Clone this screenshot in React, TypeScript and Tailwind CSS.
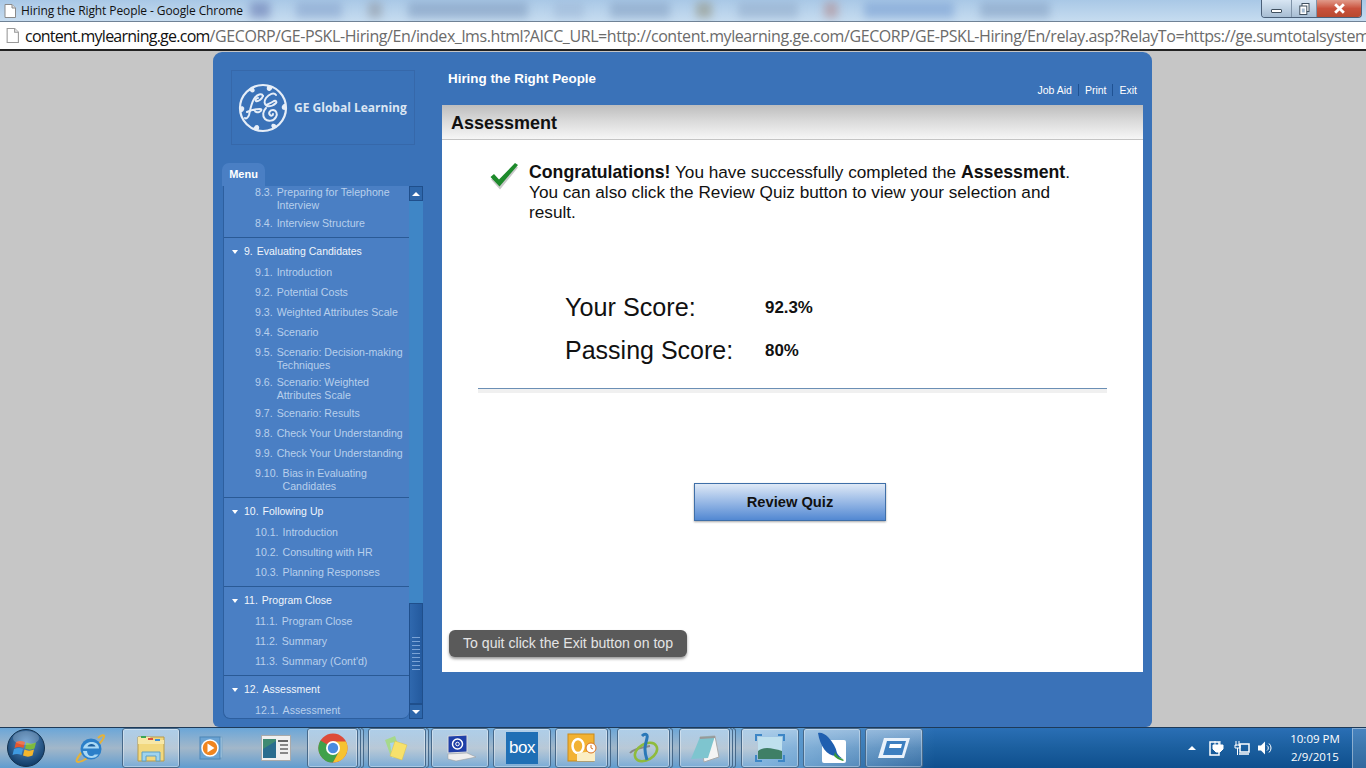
import type { ReactNode } from "react";

type Item = { n: string; t: string };
type Section = { n?: string; title?: string; items: Item[]; pb: string };

const sections: Section[] = [
  {
    pb: "pb-[3px]",
    items: [
      { n: "8.3.", t: "Preparing for Telephone Interview" },
      { n: "8.4.", t: "Interview Structure" },
    ],
  },
  {
    n: "9.",
    title: "Evaluating Candidates",
    pb: "pb-[2.5px]",
    items: [
      { n: "9.1.", t: "Introduction" },
      { n: "9.2.", t: "Potential Costs" },
      { n: "9.3.", t: "Weighted Attributes Scale" },
      { n: "9.4.", t: "Scenario" },
      { n: "9.5.", t: "Scenario: Decision-making Techniques" },
      { n: "9.6.", t: "Scenario: Weighted Attributes Scale" },
      { n: "9.7.", t: "Scenario: Results" },
      { n: "9.8.", t: "Check Your Understanding" },
      { n: "9.9.", t: "Check Your Understanding" },
      { n: "9.10.", t: "Bias in Evaluating Candidates" },
    ],
  },
  {
    n: "10.",
    title: "Following Up",
    pb: "pb-[3px]",
    items: [
      { n: "10.1.", t: "Introduction" },
      { n: "10.2.", t: "Consulting with HR" },
      { n: "10.3.", t: "Planning Responses" },
    ],
  },
  {
    n: "11.",
    title: "Program Close",
    pb: "pb-[3px]",
    items: [
      { n: "11.1.", t: "Program Close" },
      { n: "11.2.", t: "Summary" },
      { n: "11.3.", t: "Summary (Cont'd)" },
    ],
  },
  {
    n: "12.",
    title: "Assessment",
    pb: "pb-0",
    items: [{ n: "12.1.", t: "Assessment" }],
  },
];

function MenuSection({ s, last }: { s: Section; last: boolean }) {
  return (
    <div className={`${s.pb} ${last ? "" : "border-b border-[#2a5a96]"}`}>
      {s.title && (
        <div className="flex h-[25px] items-center pl-[8px] pt-[3px] text-[10.5px] text-[#f0f5fb]">
          <span className="mr-[6px] h-0 w-0 border-x-[3.5px] border-t-[4px] border-x-transparent border-t-white" />
          <span className="mr-[4px]">{s.n}</span>
          <span>{s.title}</span>
        </div>
      )}
      {s.items.map((it) => (
        <div key={it.n} className="flex min-h-[20px] gap-[4px] pt-[3px] pb-[1.5px] pl-[31px] pr-[2px] text-[10.6px] leading-[13px] text-[#b8cfec]">
          <span className="shrink-0">{it.n}</span>
          <span>{it.t}</span>
        </div>
      ))}
    </div>
  );
}

function GeLogo() {
  return (
    <svg viewBox="0 0 50 50" className="h-[50px] w-[50px] shrink-0">
      <circle cx="25" cy="25" r="23" fill="none" stroke="#e6eef8" strokeWidth="2.2" />
      <g fill="#e6eef8">
        <path d="M30 2c-2 3-1.500 5.500 1 6 2.500 0 3-2.500 4.500-4.500z" />
        <path d="M48 20c-3 1-5 3-4 5.500 1 2 3 1.500 4.500.5z" />
        <path d="M20 48c2-3 1.500-5.500-1-6-2.500 0-3 2.500-4.500 4.500z" />
        <path d="M2 30c3-1 5-3 4-5.500-1-2-3-1.500-4.500-.5z" />
        <path d="M11 6c1 3 3 4 5 3 1.500-1.500.5-3-1-5z" />
        <path d="M39 44c-1-3-3-4-5-3-1.500 1.500-.5 3 1 5z" />
      </g>
      <g fill="none" stroke="#e6eef8" strokeWidth="2" strokeLinecap="round">
        <path d="M25 13c-1-3-6-2-9 3-3 5-4 12-5 16-1 3-3 4-4 3" />
        <path d="M25 13c-1 3-5 6-7 5-1-1 0-3 2-3" />
        <path d="M9 29c4-2 8-3 13-3 2 0 2 2-1 3-2 .5-4 0-4-1" />
        <path d="M38 12c-2-3-7-1-10 3-2 3-2 7 1 8 3 1 7-1 9-3 1-1 0-3-2-2-3 2-6 3-8 4" />
        <path d="M28 25c-3 3-4 8-1 11 3 3 9 2 11-2 2-3 0-7-3-7-3 0-5 3-3 5 1 1 3 1 3-1" />
      </g>
    </svg>
  );
}

function Btn({ w, edges = 0, children }: { w: string; edges?: number; children: ReactNode }) {
  return (
    <div className="flex h-[40px] shrink-0">
      <div className={`${w} flex h-full items-center justify-center rounded-[3px] border border-[#47698a] bg-gradient-to-b from-white/45 via-white/25 to-white/15 shadow-[inset_0_0_0_1px_rgba(255,255,255,0.35)]`}>
        {children}
      </div>
      {edges > 0 && <div className="h-full w-[3px] rounded-r-[3px] border border-l-0 border-[#47698a] bg-white/20" />}
      {edges > 1 && <div className="h-full w-[3px] rounded-r-[3px] border border-l-0 border-[#47698a] bg-white/15" />}
    </div>
  );
}

export default function App() {
  return (
    <div className="flex h-[768px] w-[1366px] flex-col overflow-hidden bg-[#c6c6c6] font-['Liberation_Sans',Arial,sans-serif]">
      {/* Title bar */}
      <div className="relative flex h-[21px] shrink-0 items-center overflow-hidden bg-gradient-to-b from-[#a9c8e6] to-[#c6dcf0] pl-[4px] font-['Open_Sans',sans-serif]">
        <div className="absolute left-[250px] top-[2px] flex h-[16px] w-[1000px] gap-[26px] opacity-50 blur-[4px]">
          <span className="h-full w-[20px] bg-[#5a6ba8]" />
          <span className="h-full w-[46px] bg-[#7f9cc8]" />
          <span className="h-full w-[14px] bg-[#8a8f98]" />
          <span className="h-full w-[120px] bg-[#7793b8]" />
          <span className="h-full w-[30px] bg-[#9ab4d4]" />
          <span className="h-full w-[60px] bg-[#7d99bd]" />
          <span className="h-full w-[16px] bg-[#8d8a70]" />
          <span className="h-full w-[60px] bg-[#8ca6c6]" />
          <span className="h-full w-[14px] bg-[#b08080]" />
          <span className="h-full w-[90px] bg-[#6f97cf]" />
          <span className="h-full w-[70px] bg-[#7d99bd]" />
        </div>
        <svg viewBox="0 0 12 14" className="relative h-[14px] w-[12px]">
          <path d="M1 .5h7l3.500 3.500v9.500h-10.500z" fill="#fff" stroke="#8a8a8a" />
          <path d="M8 .5v3.500h3.500" fill="#ddd" stroke="#8a8a8a" />
        </svg>
        <span className="relative ml-[5px] text-[12px] tracking-[-0.1px] text-[#111]">Hiring the Right People - Google Chrome</span>
        <div className="absolute right-[4px] top-0 flex h-[18px] w-[101px] overflow-hidden rounded-b-[4px] border border-t-0 border-[#4a5f78]">
          <div className="flex w-[30px] items-end justify-center border-r border-[#7f93a8] bg-gradient-to-b from-[#d8e6f3] to-[#a7bdd3] pb-[4px]">
            <span className="h-[4px] w-[11px] rounded-[1px] border border-[#40505f] bg-white" />
          </div>
          <div className="flex w-[25px] items-center justify-center border-r border-[#7f93a8] bg-gradient-to-b from-[#d8e6f3] to-[#a7bdd3]">
            <svg viewBox="0 0 11 12" className="h-[12px] w-[11px]">
              <rect x="3" y=".5" width="7" height="8" fill="#fff" stroke="#40505f" />
              <rect x=".8" y="3" width="7" height="8.500" fill="#fff" stroke="#40505f" />
              <rect x="2.800" y="5.500" width="3" height="4" fill="#a7bdd3" />
            </svg>
          </div>
          <div className="flex flex-1 items-center justify-center bg-gradient-to-b from-[#e09a8a] via-[#c9513c] to-[#b8492f]">
            <svg viewBox="0 0 12 10" className="h-[11px] w-[13px]">
              <path d="M2 1l8 8M10 1l-8 8" stroke="#fff" strokeWidth="2.600" />
            </svg>
          </div>
        </div>
      </div>

      {/* Address bar */}
      <div className="flex h-[30px] shrink-0 items-center overflow-hidden border-t border-[#6f8296] border-b-2 border-b-[#222] bg-white pl-[6px] font-['Open_Sans',sans-serif]">
        <svg viewBox="0 0 12 14" className="h-[15px] w-[13px] shrink-0">
          <path d="M1 .5h7l3.500 3.500v9.500h-10.500z" fill="#fff" stroke="#999" />
          <path d="M8 .5v3.500h3.500" fill="#eee" stroke="#999" />
        </svg>
        <span className="ml-[6px] whitespace-nowrap text-[16px] tracking-[-0.41px] text-[#6b6b6b]">
          <span className="tracking-[-0.75px] text-[#111]">content.mylearning.ge.com</span>
          /GECORP/GE-PSKL-Hiring/En/index_lms.html?AICC_URL=http://content.mylearning.ge.com/GECORP/GE-PSKL-Hiring/En/relay.asp?RelayTo=https://ge.sumtotalsystem
        </span>
      </div>

      {/* Course player */}
      <div className="flex min-h-0 flex-1 pl-[213px] pt-px">
        <div className="flex h-[675px] w-[939px] rounded-t-[9px] rounded-b-[6px] bg-[#3a72b8]">
          {/* Left column */}
          <div className="flex w-[229px] shrink-0 flex-col pl-[10px]">
            <div className="ml-[8px] mt-[18px] flex h-[75px] w-[184px] items-center gap-[6px] border border-[#3668aa] pl-[6px]">
              <GeLogo />
              <span className="whitespace-nowrap font-['Open_Sans',sans-serif] text-[12px] font-bold text-[#dbe6f3]">GE Global Learning</span>
            </div>
            <div className="-ml-px mt-[18px] flex h-[23px] w-[43px] items-center justify-center rounded-t-[7px] bg-[#4a7fc4] text-[11px] font-bold text-white">
              Menu
            </div>
            <div className="flex h-[533px] w-[200px]">
              <div className="h-full w-[186px] shrink-0 overflow-hidden rounded-b-[7px] border-b border-l border-[#2d5f9f] bg-[#4a7fc4]">
                <div className="-mt-[3px]">
                  {sections.map((s, i) => (
                    <MenuSection key={i} s={s} last={i === sections.length - 1} />
                  ))}
                </div>
              </div>
              {/* Scrollbar */}
              <div className="flex h-full w-[14px] shrink-0 flex-col bg-[#3f86c6]">
                <div className="flex h-[15px] items-center justify-center border border-[#1f4f8c] bg-[#2e67ab]">
                  <span className="h-0 w-0 border-x-[4px] border-b-[4px] border-x-transparent border-b-white" />
                </div>
                <div className="flex-1" />
                <div className="flex h-[101px] flex-col items-center justify-center gap-[3px] border border-[#1f4f8c] bg-gradient-to-r from-[#2f68ae] to-[#245a9e]">
                  {[0, 1, 2, 3, 4, 5, 6, 7, 8].map((k) => (
                    <span key={k} className="h-px w-[8px] bg-[#7aa3d6]" />
                  ))}
                </div>
                <div className="flex h-[15px] items-center justify-center border border-[#1f4f8c] bg-[#2e67ab]">
                  <span className="h-0 w-0 border-x-[4px] border-t-[4px] border-x-transparent border-t-white" />
                </div>
              </div>
            </div>
          </div>

          {/* Right column */}
          <div className="flex w-[701px] shrink-0 flex-col">
            <div className="relative h-[53px] shrink-0">
              <span className="absolute left-[6px] top-[19px] text-[13.4px] font-bold leading-[16px] text-white">Hiring the Right People</span>
              <div className="absolute right-[6px] top-[31px] flex items-center text-[10.5px] leading-[14px] text-white">
                <span>Job Aid</span>
                <span className="mx-[6px] h-[12px] w-px bg-[#1f5293]" />
                <span>Print</span>
                <span className="mx-[6px] h-[12px] w-px bg-[#1f5293]" />
                <span>Exit</span>
              </div>
            </div>
            <div className="flex h-[35px] shrink-0 items-center border-b border-[#c4c4c4] bg-gradient-to-b from-[#bdbdbd] via-[#dcdcdc] to-[#f6f6f6] pl-[9px] pt-[2px] text-[18px] font-bold text-[#111]">
              Assessment
            </div>
            <div className="flex h-[532px] flex-col bg-white">
              <div className="ml-[47px] mt-[22px] flex w-[590px] items-start">
                <svg viewBox="0 0 30 28" className="h-[28px] w-[30px] shrink-0">
                  <path d="M2 16l4-3 4 5L26 2l3 2-18 22z" fill="#c9c9c9" transform="translate(0 1.500)" />
                  <path d="M1.500 15l3.500-3 5 5.500L26 1l3 2-18.500 21.500z" fill="#1d8a2b" />
                </svg>
                <p className="ml-[10px] whitespace-nowrap text-[17.2px] leading-[20px] text-[#111]">
                  <b className="text-[17.7px]">Congratulations!</b> You have successfully completed the <b className="text-[17.7px]">Assessment</b>.
                  <br />
                  You can also click the Review Quiz button to view your selection and
                  <br />
                  result.
                </p>
              </div>
              <div className="ml-[123px] mt-[64px] flex h-[43px] items-center">
                <span className="w-[200px] text-[25.2px] text-[#111]">Your Score:</span>
                <span className="text-[16.9px] font-bold text-[#111]">92.3%</span>
              </div>
              <div className="ml-[123px] flex h-[44px] items-center">
                <span className="w-[200px] text-[25px] text-[#111]">Passing Score:</span>
                <span className="text-[16.9px] font-bold text-[#111]">80%</span>
              </div>
              <div className="ml-[36px] mt-[15px] h-[5px] w-[629px] border-t border-[#6b8fb5] bg-[#f0f0f0]" />
              <div className="ml-[252px] mt-[90px] flex h-[38px] w-[192px] items-center justify-center border border-[#3f6fa8] bg-gradient-to-b from-[#dfe9f6] to-[#5288d2] text-[14.7px] font-bold text-[#111] shadow-[0_1px_2px_rgba(0,0,0,0.35)]">
                Review Quiz
              </div>
              <div className="ml-[7px] mt-[109px] flex h-[27px] w-[238px] items-center justify-center rounded-[6px] bg-[#5a5a5a] text-[14.1px] text-[#e4e4e4] shadow-[0_2px_3px_rgba(0,0,0,0.4)]">
                To quit click the Exit button on top
              </div>
            </div>
          </div>
        </div>
      </div>

      {/* Taskbar */}
      <div className="relative flex h-[41px] shrink-0 items-center border-t border-[#1e3a58] bg-gradient-to-b from-[#2a6fb5] via-[#1b5f9f] to-[#0f4f8e]">
        <div className="absolute inset-y-0 left-0 w-[760px] bg-gradient-to-b from-[#6aa6d8] via-[#a2b7c9] to-[#5f9ccf]" />
        <div className="absolute inset-y-0 left-[760px] w-[175px] bg-gradient-to-r from-[#6aa6d8] to-transparent" />

        <div className="relative flex w-[122px] shrink-0 items-center">
          <svg viewBox="0 0 40 40" className="ml-[6px] h-[40px] w-[40px]">
            <defs>
              <radialGradient id="orb" cx="50%" cy="35%" r="65%">
                <stop offset="0%" stopColor="#5c93c9" />
                <stop offset="100%" stopColor="#0f3a66" />
              </radialGradient>
            </defs>
            <circle cx="20" cy="20" r="18.500" fill="url(#orb)" stroke="#12314f" />
            <path d="M10 14c3-1.500 6-1.500 9 0l-1.500 6c-3-1.500-6-1.500-9 0z" fill="#e4572e" />
            <path d="M20.500 14.500c3 1.500 6 1.500 9.500 0l-1.500 6c-3 1.500-6 1.500-9.500 0z" fill="#7dbb3c" />
            <path d="M8 21c3-1.500 6-1.500 9 0l-1.500 6c-3-1.500-6-1.500-9 0z" fill="#3f9ae0" />
            <path d="M18.500 21.500c3 1.500 6 1.500 9.500 0l-1.500 6c-3 1.500-6 1.500-9.500 0z" fill="#f5b62c" />
            <ellipse cx="20" cy="10" rx="13" ry="7" fill="#fff" opacity=".2" />
          </svg>
          <svg viewBox="0 0 32 32" className="ml-[28px] h-[32px] w-[32px]">
            <path d="M24 6c3-3 7-4 6-1-1 3-3 5-5 7M8 20c-5 6-7 10-4 10 3 0 8-3 11-5" fill="none" stroke="#e5b23a" strokeWidth="2" />
            <circle cx="17" cy="17" r="10.500" fill="#2b7fc9" />
            <path d="M9 16.500h16c0-4-3-6.500-7.500-6.500-4 0-7.500 2.500-8.500 6.500zM9 19c.5 4 4 7 8.500 7 3 0 5.500-1 7-3.500h-4c-1 1-2 1.500-3.500 1.500-2 0-4-2-4-5z" fill="#a8d8f5" />
            <path d="M13.500 14.500c.5-1.500 2-2.500 4-2.500s3.500 1 4 2.500z" fill="#1b5f9f" />
          </svg>
        </div>

        <div className="relative flex items-center">
          <Btn w="w-[58px]">
            <svg viewBox="0 0 32 30" className="h-[30px] w-[32px]">
              <path d="M3 4h26v24h-26z" fill="#f2d87e" stroke="#b79b4a" />
              <path d="M3 4h12l2 3h12v4h-26z" fill="#f7e7a6" />
              <rect x="6" y="3" width="5" height="2" fill="#3aa655" />
              <rect x="13" y="5" width="5" height="2" fill="#d9503f" />
              <rect x="20" y="6" width="5" height="2" fill="#3f8fd6" />
              <path d="M7 28v-9h18v9h-4v-5h-10v5z" fill="#9fd4ef" stroke="#5f9fc4" />
            </svg>
          </Btn>
          <div className="flex w-[64px] shrink-0 justify-center">
            <svg viewBox="0 0 28 28" className="h-[28px] w-[28px]">
              <rect x="5" y="3" width="19" height="21" fill="#a9cce6" stroke="#7ba6c6" />
              <rect x="2" y="3" width="20" height="22" fill="#6ba4d4" stroke="#4d86b8" />
              <circle cx="12" cy="14" r="8" fill="#f0851f" stroke="#fff" strokeWidth="1.500" />
              <path d="M9.500 9.500l7 4.500-7 4.500z" fill="#fff" />
            </svg>
          </div>
          <div className="flex w-[63px] shrink-0 justify-center">
            <svg viewBox="0 0 30 26" className="h-[26px] w-[30px]">
              <rect x=".5" y=".5" width="29" height="25" fill="#f0f0f0" stroke="#aaa" />
              <rect x="2" y="4" width="13" height="19" fill="#3f8a72" />
              <path d="M2 14l13-8v17h-13z" fill="#2a6d8f" />
              <rect x="17" y="5" width="10" height="2" fill="#666" />
              <rect x="19" y="9" width="8" height="2" fill="#888" />
              <rect x="19" y="13" width="8" height="2" fill="#888" />
              <rect x="19" y="17" width="8" height="2" fill="#888" />
            </svg>
          </div>
          <Btn w="w-[51px]" edges={2}>
            <svg viewBox="0 0 30 30" className="h-[30px] w-[30px]">
              <circle cx="15" cy="15" r="14.500" fill="#dd4b39" />
              <path d="M2.500 7.500A14.500 14.500 0 0 0 15 29.500l6-11z" fill="#3fa14a" />
              <path d="M15 8.500h13A14.500 14.500 0 0 1 15 29.500l6-11z" fill="#f6c331" />
              <circle cx="15" cy="15" r="7" fill="#fff" />
              <circle cx="15" cy="15" r="5.200" fill="#4a8be0" />
            </svg>
          </Btn>
          <div className="w-[4px]" />
          <Btn w="w-[58px]" edges={1}>
            <svg viewBox="0 0 30 28" className="h-[28px] w-[30px]">
              <path d="M3 6l10-4 5 14-10 4z" fill="#a6d98c" />
              <path d="M8 9l11-2 2 15-11 2z" fill="#a8d4ee" />
              <path d="M13 7l12 4-5 15-12-4z" fill="#f7e16b" stroke="#d9c04a" strokeWidth=".5" />
            </svg>
          </Btn>
          <div className="w-[2px]" />
          <Btn w="w-[58px]">
            <svg viewBox="0 0 34 28" className="h-[28px] w-[34px]">
              <path d="M5 2l19-1v17l-19 1z" fill="#1f3fa8" stroke="#ddd" />
              <circle cx="14.500" cy="10" r="5" fill="none" stroke="#fff" strokeWidth="1.500" />
              <circle cx="14.500" cy="10" r="1.800" fill="none" stroke="#fff" />
              <path d="M5 20l19-1 9 4-20 4-8-2z" fill="#eee" stroke="#999" strokeWidth=".5" />
            </svg>
          </Btn>
          <div className="w-[4px]" />
          <Btn w="w-[58px]">
            <div className="flex h-[32px] w-[32px] items-center justify-center bg-[#1f6fb5] text-[17px] tracking-[-0.5px] text-white">box</div>
          </Btn>
          <div className="w-[4px]" />
          <Btn w="w-[53px]" edges={1}>
            <svg viewBox="0 0 30 30" className="h-[30px] w-[30px]">
              <rect x="1" y="1" width="26" height="27" fill="#f2b233" stroke="#c98a1a" />
              <ellipse cx="11" cy="13" rx="5.500" ry="7" fill="none" stroke="#fff" strokeWidth="2.500" />
              <path d="M10 20l18-2v10h-18z" fill="#fbeec4" />
              <circle cx="24" cy="15" r="5" fill="#fff" stroke="#d9701f" />
              <path d="M24 12v3l2 1" stroke="#d9701f" fill="none" />
            </svg>
          </Btn>
          <div className="w-[6px]" />
          <Btn w="w-[53px]" edges={1}>
            <svg viewBox="0 0 34 32" className="h-[32px] w-[34px]">
              <path d="M3 21c3-4 14-6 20-7" fill="none" stroke="#888" strokeWidth="2" />
              <ellipse cx="19" cy="20" rx="12" ry="8" fill="none" stroke="#8fbb3c" strokeWidth="2.500" transform="rotate(-30 19 20)" />
              <path d="M15 4c3-3 6-2 5 2-1 6-4 10 0 22" fill="none" stroke="#2a78b8" strokeWidth="3" />
            </svg>
          </Btn>
          <div className="w-[6px]" />
          <Btn w="w-[51px]" edges={2}>
            <svg viewBox="0 0 30 30" className="h-[30px] w-[30px]">
              <path d="M10 4l15-1 4 21-15 5z" fill="#f4f4f4" stroke="#aaa" />
              <path d="M1 26L10 4l15-1-7 22z" fill="#7ec5cf" />
              <path d="M10 4l15-1v2l-15 1z" fill="#999" />
            </svg>
          </Btn>
          <div className="w-[5px]" />
          <Btn w="w-[58px]">
            <svg viewBox="0 0 30 28" className="h-[28px] w-[30px]">
              <rect x="3" y="3" width="24" height="22" fill="#bfe0ee" />
              <path d="M3 17c6-5 14-3 24 0v8h-24z" fill="#3f7f66" />
              <path d="M1 7V1h6M23 1h6v6M29 21v6h-6M7 27H1v-6" fill="none" stroke="#3d86c6" strokeWidth="2" />
            </svg>
          </Btn>
          <div className="w-[4px]" />
          <Btn w="w-[58px]">
            <svg viewBox="0 0 30 32" className="h-[32px] w-[30px]">
              <rect x="5" y="8" width="24" height="23" rx="2" fill="#fff" />
              <path d="M1 1c3-1 7 1 10 4 5 5 8 11 9 16 1 2 3 4 6 6-3-1-5-2-7-3C10 24 3 14 1 1z" fill="#1f5fb0" />
              <path d="M18 20c1 3 4 6 9 8l-1 1c-4-1-7-3-9-5z" fill="#3a9a3a" />
            </svg>
          </Btn>
          <div className="w-[4px]" />
          <Btn w="w-[58px]">
            <svg viewBox="0 0 32 22" className="h-[22px] w-[32px]">
              <path d="M6 1h26l-6 20h-26z" fill="#eaf2fb" />
              <path d="M9 4h19l-4 14h-19z" fill="#3d7fc0" />
              <path d="M12 7h12l-1 4h-12z" fill="#fff" />
            </svg>
          </Btn>
        </div>

        {/* Tray */}
        <div className="relative ml-auto flex h-full items-center font-['Open_Sans',sans-serif] text-white">
          <span className="h-0 w-0 border-x-[4px] border-b-[4px] border-x-transparent border-b-white" />
          <svg viewBox="0 0 16 16" className="ml-[13px] h-[16px] w-[16px]">
            <rect x="1" y="2" width="9" height="13" fill="none" stroke="#fff" strokeWidth="1.500" />
            <path d="M6 1v4M11 1v4M4 5h10v4l-3 3h-4l-3-3z" fill="#fff" stroke="#fff" />
          </svg>
          <svg viewBox="0 0 16 16" className="ml-[9px] h-[16px] w-[16px]">
            <path d="M2 1v5M5 1v5M1 5h5v3h-5zM3.500 8v7" stroke="#fff" fill="none" />
            <rect x="6" y="4" width="9" height="8" fill="none" stroke="#fff" strokeWidth="1.500" />
            <path d="M5 14h10" stroke="#fff" strokeWidth="1.500" />
          </svg>
          <svg viewBox="0 0 16 16" className="ml-[7px] h-[16px] w-[16px]">
            <path d="M1 5.500h3l4-4v13l-4-4h-3z" fill="#fff" />
            <path d="M10 5.500a3 3 0 0 1 0 5M12 3.500a6 6 0 0 1 0 9" stroke="#fff" fill="none" />
          </svg>
          <div className="ml-[8px] flex w-[68px] flex-col items-center text-[11.5px] leading-[18px]">
            <span>10:09 PM</span>
            <span>2/9/2015</span>
          </div>
          <div className="ml-[3px] h-full w-[14px] border-l border-t border-white/40 bg-white/15" />
        </div>
      </div>
    </div>
  );
}
